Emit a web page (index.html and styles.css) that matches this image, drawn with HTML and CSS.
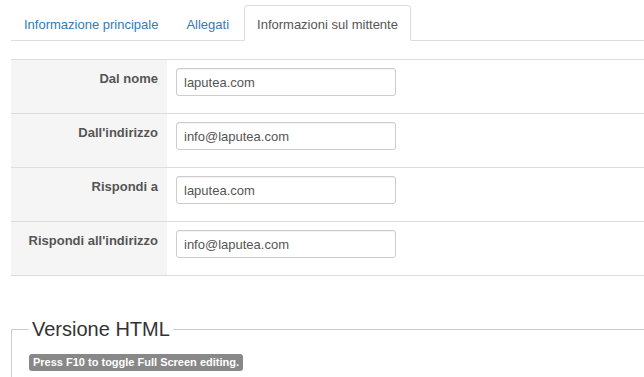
FILE: index.html
```html
<!DOCTYPE html>
<html lang="it">
<head>
  <meta charset="UTF-8" />
  <meta name="viewport" content="width=device-width, initial-scale=1.0"/>
  <title>Mittente</title>
  <link rel="stylesheet" href="styles.css">
</head>
<body>
  <ul class="tabs">
    <li><a href="#">Informazione principale</a></li>
    <li><a href="#">Allegati</a></li>
    <li class="active"><a href="#">Informazioni sul mittente</a></li>
  </ul>

  <div class="sender-form">
    <div class="form-row">
      <label class="row-label">Dal nome</label>
      <div class="row-field"><input type="text" value="laputea.com" /></div>
    </div>
    <div class="form-row">
      <label class="row-label">Dall'indirizzo</label>
      <div class="row-field"><input type="text" value="info@laputea.com" /></div>
    </div>
    <div class="form-row">
      <label class="row-label">Rispondi a</label>
      <div class="row-field"><input type="text" value="laputea.com" /></div>
    </div>
    <div class="form-row">
      <label class="row-label">Rispondi all'indirizzo</label>
      <div class="row-field"><input type="text" value="info@laputea.com" /></div>
    </div>
  </div>

  <fieldset class="html-box">
    <legend>Versione HTML</legend>
    <span class="hint">Press F10 to toggle Full Screen editing.</span>
  </fieldset>
</body>
</html>
```

FILE: styles.css
```css
* { box-sizing: border-box; }

html, body { overflow: hidden; }

body {
  margin: 0;
  padding: 5px 0 0 11px;
  font-family: 'Liberation Sans', Arial, sans-serif;
  font-size: 13px;
  color: #333;
  background: #fff;
}

.tabs {
  display: flex;
  list-style: none;
  margin: 0 0 18px;
  padding: 0;
  border-bottom: 1px solid #ddd;
}

.tabs li {
  margin-right: 2px;
  margin-bottom: -1px;
}

.tabs a {
  display: block;
  padding: 10px 12px 6px;
  line-height: 18px;
  border: 1px solid transparent;
  border-radius: 4px 4px 0 0;
  color: #337ab7;
  text-decoration: none;
}

.tabs .active a {
  color: #555;
  background: #fff;
  border-color: #ddd;
  border-bottom-color: #fff;
}

.sender-form {
  border-bottom: 1px solid #ddd;
}

.form-row {
  display: grid;
  grid-template-columns: 156px 1fr;
  height: 54px;
  border-top: 1px solid #ddd;
}

.row-label {
  background: #f5f5f5;
  text-align: right;
  font-weight: bold;
  color: #555;
  padding: 10px 9px 0 0;
  line-height: 18px;
}

.row-field {
  padding: 8px 0 0 9px;
}

.row-field input {
  width: 220px;
  height: 28px;
  padding: 0 7px;
  border: 1px solid #ccc;
  border-radius: 3px;
  font-family: inherit;
  font-size: 13px;
  color: #555;
  box-shadow: inset 0 1px 1px rgba(0, 0, 0, 0.05);
}

.html-box {
  margin: 41px 0 0;
  padding: 0 17px 20px;
  border: 1px solid #ccc;
  border-right: none;
  border-bottom: none;
}

.html-box legend {
  padding: 0 3px;
  font-size: 20px;
  line-height: 24px;
  color: #333;
}

.hint {
  display: inline-block;
  margin-top: 13px;
  padding: 2px 4px;
  background: #888;
  color: #fff;
  border-radius: 3px;
  font-size: 11px;
  font-weight: bold;
  line-height: 13px;
}
```
